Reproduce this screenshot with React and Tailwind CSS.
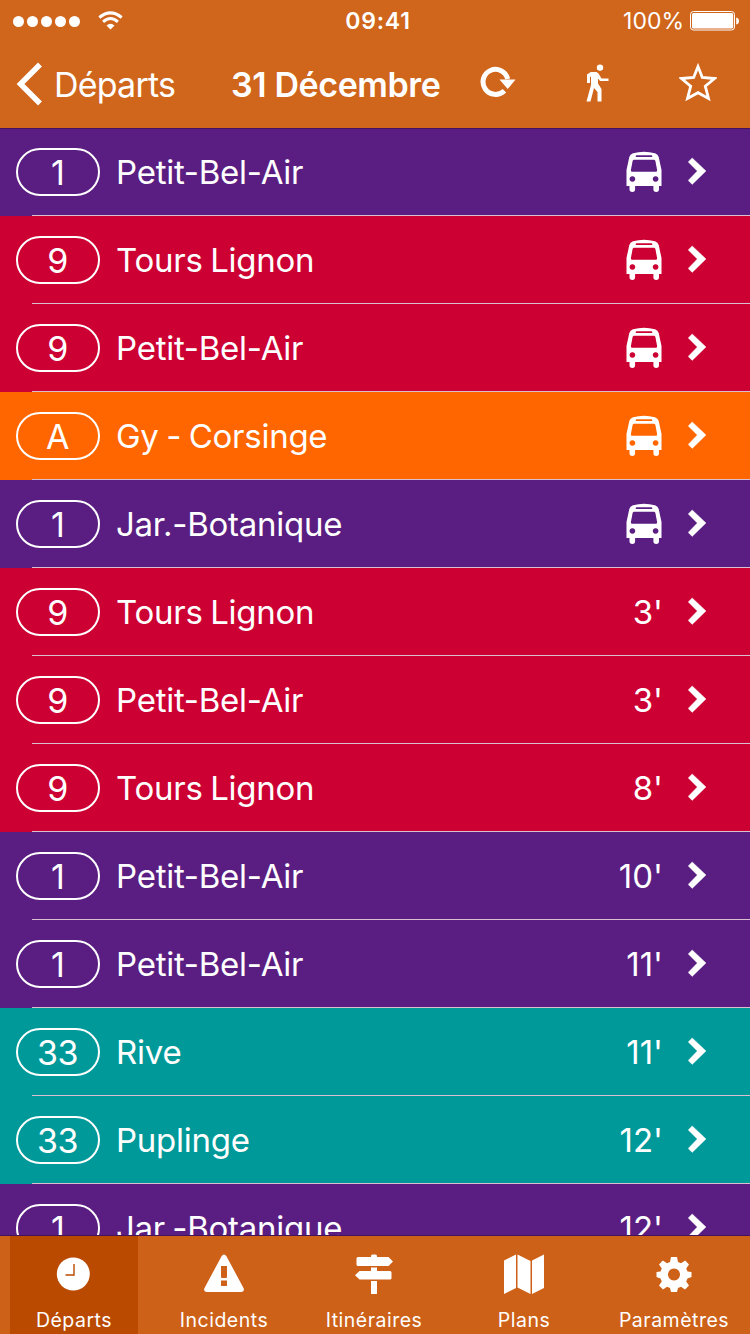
const ROUTES = [
  ['1', 'Petit-Bel-Air', null, 'bg-[#5a1e82]'],
  ['9', 'Tours Lignon', null, 'bg-[#cc0033]'],
  ['9', 'Petit-Bel-Air', null, 'bg-[#cc0033]'],
  ['A', 'Gy - Corsinge', null, 'bg-[#ff6600]'],
  ['1', 'Jar.-Botanique', null, 'bg-[#5a1e82]'],
  ['9', 'Tours Lignon', "3'", 'bg-[#cc0033]'],
  ['9', 'Petit-Bel-Air', "3'", 'bg-[#cc0033]'],
  ['9', 'Tours Lignon', "8'", 'bg-[#cc0033]'],
  ['1', 'Petit-Bel-Air', "10'", 'bg-[#5a1e82]'],
  ['1', 'Petit-Bel-Air', "11'", 'bg-[#5a1e82]'],
  ['33', 'Rive', "11'", 'bg-[#009999]'],
  ['33', 'Puplinge', "12'", 'bg-[#009999]'],
  ['1', 'Jar.-Botanique', "12'", 'bg-[#5a1e82]'],
];

function Bus() {
  return (
    <svg className="block h-[42px] w-[36px]" viewBox="0 0 36 42" fill="white">
      <path
        fillRule="evenodd"
        d="M.5 35V19L3.300 6Q4 3.400 7 2.200Q18-.8 29 2.200Q32 3.400 32.700 6L35.500 19V35H33V38.300Q33 41 30.200 41T27.400 38.300V35H9.100V38.300Q9.100 41 6.300 41T3.500 38.300V35ZM10.700 4.300Q9.700 4.300 9.700 5.200T10.700 6.100H25.300Q26.300 6.100 26.300 5.200T25.300 4.300ZM8.200 8.800Q7 8.800 6.600 10L4.900 19Q4.700 20.800 6.100 20.800H29.900Q31.300 20.800 31.100 19L29.400 10Q29 8.800 27.800 8.800ZM6.400 25.200A2.800 2.800 0 1 0 6.410 25.200ZM29.600 25.200A2.800 2.800 0 1 0 29.610 25.200Z"
      />
    </svg>
  );
}

function Chevron() {
  return (
    <svg className="mb-[2px] block h-[28px] w-[18px]" viewBox="0 0 18 28" fill="white">
      <path d="M.2 4.900 4.200 .9 18 14 4.200 27.400 .2 23.400 9.300 14Z" stroke="white" strokeWidth=".4" />
    </svg>
  );
}

function Row({ line, name, time, color }) {
  return (
    <div className={`flex h-[88px] shrink-0 flex-col ${color}`}>
      <div className="flex h-[87px] items-center pl-[16px] pr-[44px] pt-[1px]">
        <div className="flex h-[48px] w-[84px] items-center justify-center rounded-[24px] border-2 border-white pr-[1px] pt-[1px] text-[34px] font-normal leading-[47px] tracking-[-0.6px]">
          {line}
        </div>
        <div className="ml-[16px] flex-1 whitespace-nowrap text-[33px] font-normal leading-[48px] tracking-[-0.25px] [word-spacing:-1.5px]">{name}</div>
        {time ? <div className="mr-[25px] text-[33px] font-normal leading-[48px]">{time}</div> : <div className="mr-[26px] pb-[1px]"><Bus /></div>}
        <Chevron />
      </div>
      <div className="ml-[32px] h-px bg-[#d9bfd0]" />
    </div>
  );
}

function ClockIcon() {
  return (
    <svg className="h-[42px] w-[42px] shrink-0" viewBox="0 0 42 42">
      <circle cx="20.300" cy="21" r="16.500" fill="white" />
      <path d="M21 11V22H12.500" fill="none" stroke="#ba4a00" strokeWidth="1.400" />
    </svg>
  );
}

function WarningIcon() {
  return (
    <svg className="h-[42px] w-[42px] shrink-0" viewBox="0 0 42 42" fill="white">
      <path fillRule="evenodd" d="M18.700 3Q21 0 23.300 3L40.500 35Q42 38.500 38.500 39H3.500Q0 38.500 1.500 35ZM18 13V24L18.500 25H23.500L24 24V13ZM18 27.500V33H24V27.500Z" />
    </svg>
  );
}

function SignIcon() {
  return (
    <svg className="h-[42px] w-[42px] shrink-0" viewBox="0 0 42 42" fill="white">
      <path d="M18 4V3Q18 1.500 19.500 1.500H22.500Q24 1.500 24 3V4H35.500L40 8.500 35.500 13H5Q3.500 13 3.500 11.500V5.500Q3.500 4 5 4ZM18 14.500H24V18H37Q38.500 18 38.500 19.500V25Q38.500 26.500 37 26.500H6.500L2 22.250 6.500 18H18ZM18 28H24V41H18Z" />
    </svg>
  );
}

function MapIcon() {
  return (
    <svg className="h-[42px] w-[42px] shrink-0" viewBox="0 0 42 42" fill="white">
      <path d="M1 7.500 13 1.500V35L1 41ZM14.500 1.500 27.500 8V41L14.500 34.500ZM29 7.500 41 1.500V35L29 41Z" />
    </svg>
  );
}

function GearIcon() {
  return (
    <svg className="h-[42px] w-[42px] shrink-0" viewBox="0 0 42 42">
      <path fill="white" fillRule="evenodd" d="M18 4H24L25 9 28 10.300 32.200 7.500 36 11.500 33.200 15.600 34.500 18.500 38.500 19V24L34.500 25.500 33.200 28.500 36 32.600 32 36.500 28 33.700 25 34.900 24 39H18L17 34.900 14 33.700 10 36.500 6 32.600 8.800 28.500 7.500 25.500 3.500 24V19L7.500 18.500 8.800 15.600 6 11.500 9.800 7.500 14 10.300 17 9ZM21 15.500A6 6 0 1 0 21.010 15.500Z" />
    </svg>
  );
}

const TABS = [
  ['Départs', ClockIcon],
  ['Incidents', WarningIcon],
  ['Itinéraires', SignIcon],
  ['Plans', MapIcon],
  ['Paramètres', GearIcon],
];

export default function App() {
  return (
    <div className="flex h-[1334px] w-[750px] flex-col overflow-hidden bg-[#d0651c] font-['Inter','Liberation_Sans',sans-serif] text-white">
      <header className="relative z-10 flex h-[128px] shrink-0 flex-col bg-[#d0651c] shadow-[0_1px_0_#45135c]">
        <div className="grid h-[42px] grid-cols-3 items-center">
          <div className="flex items-center pl-[13px]">
            <div className="flex gap-[3px]">
              {[0, 1, 2, 3, 4].map((n) => <span key={n} className="h-[11px] w-[11px] rounded-full bg-white" />)}
            </div>
            <svg className="ml-[18px] h-[20px] w-[25px]" viewBox="0 0 25 20" fill="none" stroke="white" strokeWidth="3">
              <path d="M1.300 6.500Q12.500-2.800 23.700 6.500M5.100 10.800Q12.500 4.200 19.900 10.800" />
              <path d="M8.500 14.500Q12.500 11 16.500 14.500L12.500 18.500Z" fill="white" stroke="none" />
            </svg>
          </div>
          <div className="pl-[6px] text-center text-[23px] font-semibold leading-[42px] tracking-[0.8px]">09:41</div>
          <div className="flex items-center justify-end pr-[11px]">
            <span className="mr-[6px] text-[23px] font-normal leading-[42px]">100%</span>
            <svg className="mb-[1px] h-[20px] w-[49px]" viewBox="0 0 49 20">
              <rect x=".5" y=".5" width="44" height="18.500" rx="3" fill="none" stroke="white" />
              <rect x="2" y="2" width="41.200" height="15.500" rx="1.500" fill="white" />
              <path d="M46.200 6.500Q49 7 49 10T46.200 13.500Z" fill="white" />
            </svg>
          </div>
        </div>
        <div className="flex h-[86px] items-center pl-[16px] pr-[33px] pb-[2px]">
          <svg className="h-[44px] w-[26px]" viewBox="0 0 26 44" fill="none" stroke="white" strokeWidth="5.500">
            <path d="M24 2.500 4.500 22 24 41.500" />
          </svg>
          <span className="ml-[12px] w-[177px] whitespace-nowrap pt-[1px] text-[34px] font-normal leading-[48px] tracking-[-0.8px]">Départs</span>
          <span className="w-[210px] whitespace-nowrap pt-[1px] text-[34px] font-semibold leading-[48px] tracking-[-0.4px]">31 Décembre</span>
          <div className="flex flex-1 items-center justify-between pb-[5px] pl-[38px]">
            <svg className="h-[40px] w-[37px]" viewBox="0 0 37 40">
              <path d="M25.400 28.700A12.500 12.500 0 1 1 28.700 17" fill="none" stroke="white" strokeWidth="5" />
              <path d="M20.500 17.500H36.500L28.700 27Z" fill="white" />
            </svg>
            <svg className="h-[40px] w-[24px]" viewBox="1 0 24 40" fill="white">
              <circle cx="15" cy="5.600" r="3.200" />
              <path d="M5.800 10H11.500L13.500 11.500 16.500 16.500H23.500V19H15L13 16.500V21.500L16.500 27V39.500H12.500V30L9 26 5.500 39.500H1.500L6 23V14.500L5 15V21H2V12.500Z" />
            </svg>
            <svg className="h-[40px] w-[38px]" viewBox="0 0 38 40" fill="none" stroke="white" strokeWidth="2.800">
              <path d="M19 4.500 23.300 15.500 35.500 16.500 26.300 24.200 29.500 36.500 19 30.700 8.500 36.500 11.700 24.200 2.500 16.500 14.700 15.500Z" />
            </svg>
          </div>
        </div>
      </header>
      <main className="flex h-[1107px] shrink-0 flex-col overflow-hidden">
        {ROUTES.map(([line, name, time, color], index) => (
          <Row key={index} line={line} name={name} time={time} color={color} />
        ))}
      </main>
      <nav className="flex h-[99px] shrink-0 justify-between border-t border-[#45135c] bg-[#cd6118] pl-[10px] pr-[12px]">
        {TABS.map(([label, Icon], index) => (
          <div key={label} className={`flex w-[128px] flex-col items-center pt-[17px] ${index === 0 ? 'bg-[#ba4a00]' : ''}`}>
            <Icon />
            <span className="mt-[13px] whitespace-nowrap text-[19.5px] font-normal leading-[24px] tracking-[0.5px]">{label}</span>
          </div>
        ))}
      </nav>
    </div>
  );
}
